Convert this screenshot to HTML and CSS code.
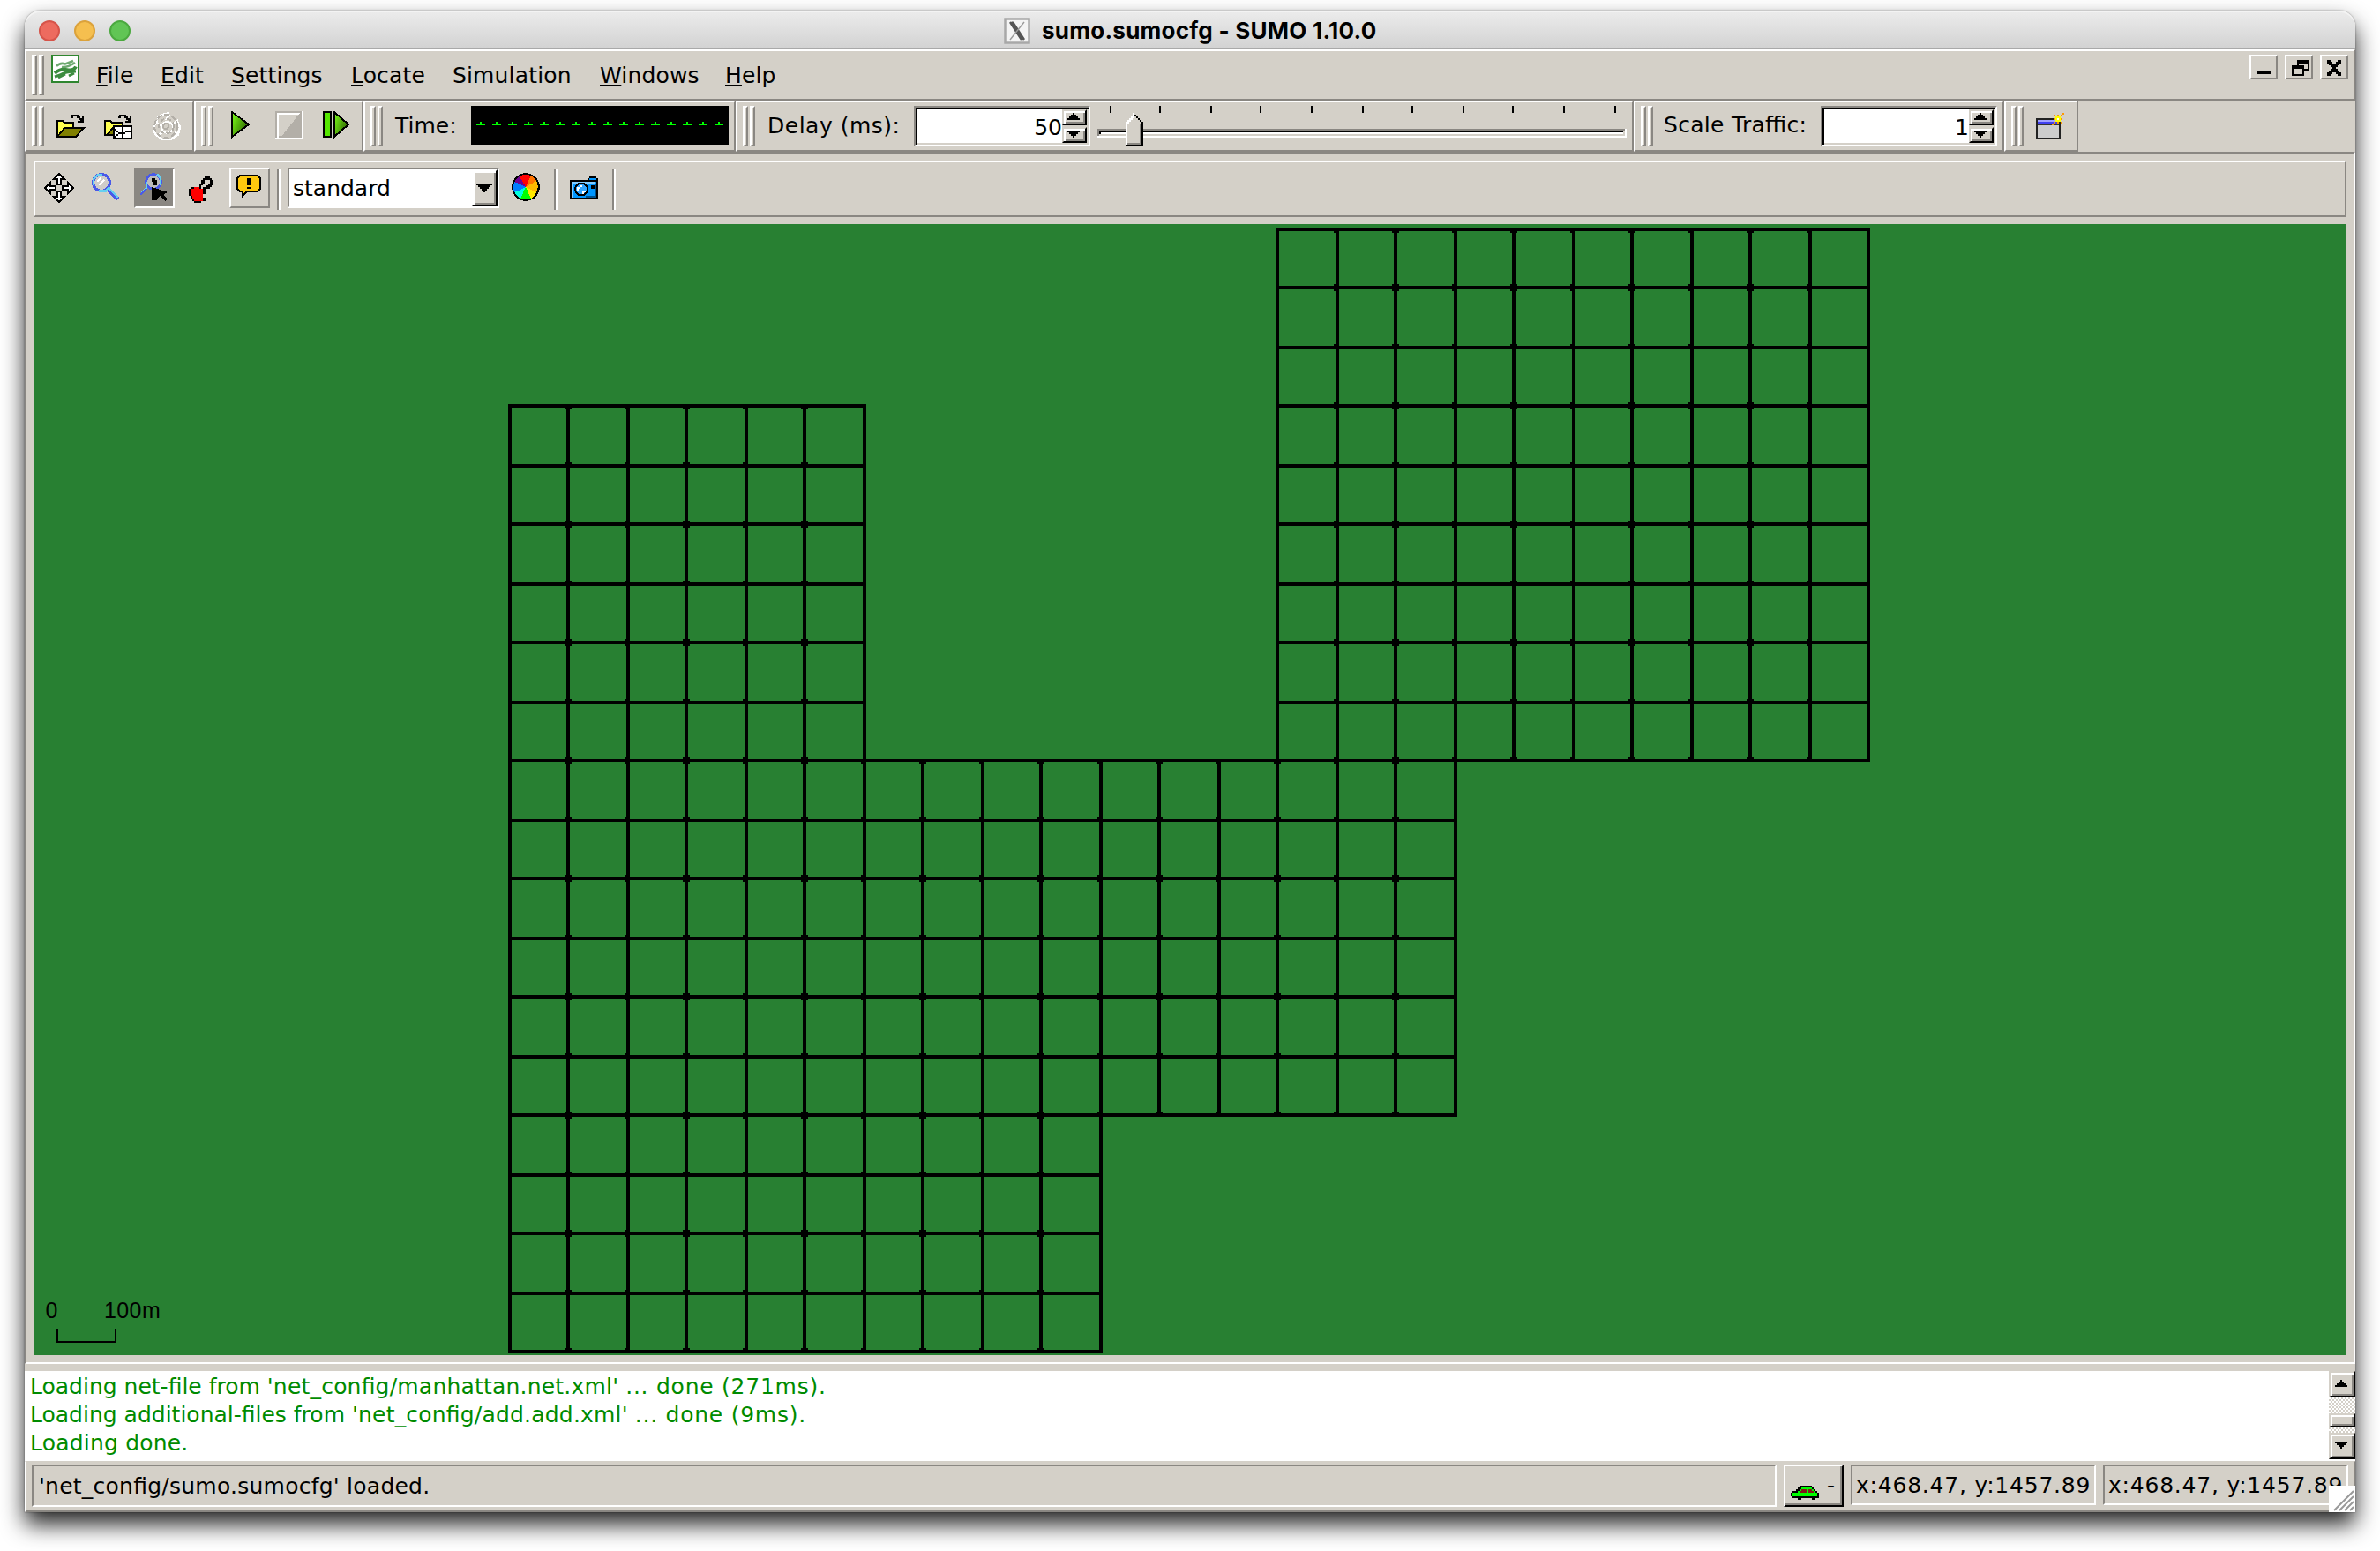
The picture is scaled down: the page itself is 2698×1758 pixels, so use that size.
FILE: index.html
```html
<!DOCTYPE html>
<html lang="en">
<head>
<meta charset="utf-8">
<title>sumo.sumocfg - SUMO 1.10.0</title>
<link rel="stylesheet" href="styles.css">
</head>
<body>
<div class="window">
  <header class="titlebar">
    <div class="lights"><i class="light red"></i><i class="light yellow"></i><i class="light green"></i></div>
    <div class="title">
      <svg class="xicon" viewBox="0 0 30 30"><rect x="1.5" y="1.5" width="27" height="27" fill="#f4f4f4" stroke="#a8a8a8" stroke-width="2.5"/><path d="M7 5L20 25M10 5L23 25" stroke="#555" stroke-width="2.4"/><path d="M8.500 5L21.500 25" stroke="#555" stroke-width="3"/><path d="M23 5L7 25" stroke="#999" stroke-width="1.400"/></svg>
      <span class="title-text">sumo.sumocfg - SUMO 1.10.0</span>
    </div>
  </header>

  <nav class="menubar">
    <div class="grip"><i></i><i></i></div>
    <svg class="sumo" viewBox="0 0 16 16"><rect x=".5" y=".5" width="15" height="15" fill="#fff" stroke="#2f862f"/><g fill="none" stroke="#3c8c3f" shape-rendering="auto"><path d="M3 6.500Q5 4.300 8 5.200L12.500 3.500M6 7Q9 7.500 13.500 4.500" stroke-width="1.300" opacity=".75"/><path d="M2 10.500Q5 7.800 9 8.500T14 6.800" stroke-width="1.900"/><path d="M2 12.500L5 11.500Q8 9.500 14 9.500M4 13L8 11M10 12L13 10.500" stroke-width="1.500"/></g></svg>
    <div class="menus">
      <span><u>F</u>ile</span><span><u>E</u>dit</span><span><u>S</u>ettings</span><span><u>L</u>ocate</span><span>Simulation</span><span><u>W</u>indows</span><span><u>H</u>elp</span>
    </div>
    <div class="mdi-buttons">
      <button><svg viewBox="0 0 16 14"><path d="M4 9h8v2H4z"/></svg></button>
      <button><svg viewBox="0 0 16 14"><path fill-rule="evenodd" d="M7 3h7v6h-3v3H4V6h3zM8 5v1h3v2h2V5zM5 8v3h5V8z"/></svg></button>
      <button><svg viewBox="0 0 16 14"><path d="M4 3h2v1h1v1h2V4h1V3h2v2h-1v1h-1v1h-1v1h1v1h1v1h1v2h-2v-1H9v-1H7v1H6v1H4v-2h1V9h1V8h1V7H6V6H5V5H4z"/></svg></button>
    </div>
  </nav>

  <div class="toolbar">
    <section class="bar">
      <div class="grip"><i></i><i></i></div>
      <div class="btn"><svg viewBox="0 0 17 17"><path d="M.5 14.500V5.500h3l1 1h5v3" fill="#ffff50" stroke="#000"/><path d="M.5 14.500l4-5h11l-4.500 5z" fill="#808000" stroke="#000"/><path d="M8 3.500h1v-1h3v1h1v1h1v1M15 3v3h-3" fill="none" stroke="#000"/></svg></div>
      <div class="btn"><svg viewBox="0 0 17 17"><path d="M.5 13.500V5.500h3l1 1h6v7z" fill="#ffff50" stroke="#000"/><path d="M1.500 13.500l4-4.500v4.500z" fill="#808000" stroke="#000"/><path d="M8 3.500h1v-1h3v1h1v1h1v1M15 3v3h-3" fill="none" stroke="#000"/><path d="M5 8h11v8H5z"/><path d="M6 9h4v3H8v-1H7v-1H6zM11 9h4v2h-3v1h-1zM6 11h1v1h1v1H7v1H6zM7 14h1v-1h2v2H7zM11 13h1v-1h3v3h-4z" fill="#fff"/></svg></div>
      <div class="btn"><svg viewBox="0 0 17 17"><g fill="none" stroke="#fff"><path d="M3 4l3-2 4-1M14 5l2 4-1 4-4 3H6l-4-3-1-4 2-4" stroke-width="1.200"/><circle cx="8.800" cy="9.200" r="3.200"/><path d="M8 5l2-3M12 7l3-2M13 11l2 3M6 12l-3 2M5 8L2 6"/></g><g fill="none" stroke="#b3afa8"><circle cx="8" cy="8.500" r="6.500" stroke-dasharray="3 1.200"/><circle cx="8.200" cy="8.500" r="4.200" stroke-dasharray="2.500 1.500"/><circle cx="8" cy="8.500" r="1.500"/></g></svg></div>
    </section>
    <section class="bar">
      <div class="grip"><i></i><i></i></div>
      <div class="btn"><svg viewBox="0 0 17 17"><defs><linearGradient id="g" x2="1" y2=".6"><stop stop-color="#7dff1a"/><stop offset="1" stop-color="#2f6600"/></linearGradient></defs><path d="M3.500.500V14.500L13 7.500z" fill="url(#g)" stroke="#000"/></svg></div>
      <div class="btn"><svg viewBox="0 0 17 17"><path d="M1.500.500h14v14h-14z" fill="#d4d0c8" stroke="#b3afa8"/><path d="M2.500 15V1.500H15" fill="none" stroke="#fff"/><path d="M15 1v14H4z" fill="#b3afa8"/><path d="M1 15.500h15.500V0" fill="none" stroke="#fff"/></svg></div>
      <div class="btn"><svg viewBox="0 0 17 17"><path d="M1.500.500h4v14h-4z" fill="#55e600" stroke="#000"/><path d="M7.500.500V14.500L15.500 7.500z" fill="url(#g)" stroke="#000"/></svg></div>
    </section>
    <section class="bar">
      <div class="grip"><i></i><i></i></div>
      <span class="label time">Time:</span>
      <div class="lcd"><i></i><i></i><i></i><i></i><i></i><i></i><i></i><i></i><i></i><i></i><i></i><i></i><i></i><i></i><i></i><i></i></div>
    </section>
    <section class="bar">
      <div class="grip"><i></i><i></i></div>
      <span class="label delay">Delay (ms):</span>
      <div class="spinner"><span>50</span><div class="arrows"><b><svg viewBox="0 0 7 4"><path d="M3 0h1v1h1v1h1v1h1v1H0V3h1V2h1V1h1z"/></svg></b><b><svg viewBox="0 0 7 4"><path d="M0 0h7v1H6v1H5v1H4v1H3V3H2V2H1V1H0z"/></svg></b></div></div>
      <svg class="slider" viewBox="0 0 300 23"><path d="M7 0h1v4H7zM35 0h1v4h-1zM64 0h1v4h-1zM92 0h1v4h-1zM121 0h1v4h-1zM150 0h1v4h-1zM178 0h1v4h-1zM207 0h1v4h-1zM235 0h1v4h-1zM264 0h1v4h-1zM293 0h1v4h-1z"/><path fill="#fff" d="M0 13h300v5H0z"/><path fill="#8a8782" d="M0 13h299v1H1v3H0z"/><path d="M1 14h297v1H2v1H1z"/><path fill="#d4d0c8" d="M1 16h298v-2h-1v2z M1 16h298v1H1z"/><path fill="#d4d0c8" d="M16 9l4.500-5L26 9v14H16z"/><path fill="#fff" d="M16 9h1V8h1V7h1V6h1V4h1v3h-1v1h-1v1h-1v1h-1v12h-1z"/><path fill="#8a8782" d="M24 10h1v12h-8v-1h7z"/><path d="M21 5h1v1h1v1h1v1h1v1h1v14H16v-1h9V9h-1V8h-1V7h-1V6h-1z"/></svg>
    </section>
    <section class="bar">
      <div class="grip"><i></i><i></i></div>
      <span class="label scale">Scale Traffic:</span>
      <div class="spinner"><span>1</span><div class="arrows"><b><svg viewBox="0 0 7 4"><path d="M3 0h1v1h1v1h1v1h1v1H0V3h1V2h1V1h1z"/></svg></b><b><svg viewBox="0 0 7 4"><path d="M0 0h7v1H6v1H5v1H4v1H3V3H2V2H1V1H0z"/></svg></b></div></div>
    </section>
    <section class="bar">
      <div class="grip"><i></i><i></i></div>
      <div class="btn"><svg viewBox="3 0 17 17"><path d="M3.500 4.500h13v11h-13z" fill="#ccc" stroke="#222"/><path d="M4 5h12v1H4z" fill="#a0a0ff"/><path d="M4 6h12v1H4z" fill="#4040f0"/><path d="M4 7h12v1H4z" fill="#333"/><path d="M13 2h1v1h-1zM17 2h1v1h-1zM13 6h1v1h-1zM17 6h1v1h-1zM12 7h1v1h-1zM18 1h1v1h-1zM15 2h1v1h-1zM15 6h1v1h-1zM13 4h1v1h-1zM17 4h1v1h-1z" fill="#ff9a00"/><path d="M14 3h3v3h-3z" fill="#ff0"/><path d="M15 4h1v1h-1z" fill="#fff"/></svg></div>
    </section>
  </div>

  <main class="mdi">
    <div class="viewbar">
      <div class="btn"><svg viewBox="0 0 17 17"><path fill="#fff" stroke="#000" d="M8.500.500l3 3h-2v3h-2v-3h-2zM8.500 16.500l3-3h-2v-3h-2v3h-2zM.5 8.500l3-3v2h3v2h-3v2zM16.500 8.500l-3-3v2h-3v2h3v2z"/></svg></div>
      <div class="btn"><svg viewBox="0 0 17 17"><circle cx="5.500" cy="5.500" r="4.700" fill="#d0cdca" stroke="#4a5ae8" stroke-width="1.600"/><path d="M1 7V3.500L3.500 1H6M4 10.300h4l2.300-2.300" fill="none" stroke="#66d0f0" stroke-width="1.300"/><path d="M3 5l2-2M4 7l3-3" stroke="#fff"/><path d="M9.500 9.500l5.500 5.500" stroke="#4a5ae8" stroke-width="2.400"/><path d="M10 9l5 5" stroke="#66d0f0"/></svg></div>
      <div class="btn pressed"><svg viewBox="0 0 17 17"><circle cx="8" cy="5" r="4.200" fill="#bbb" stroke="#4a5ae8" stroke-width="1.500"/><path d="M12 7V3L10 .700M4 5v3.500L1 11.500" fill="none" stroke="#66d0f0" stroke-width="1.300"/><path d="M4 9l-3.500 3.500" stroke="#4a5ae8" stroke-width="1.300"/><path d="M7 3h2v1h1v3H8V5H7z"/><path d="M7 8l9 3-2.500 1.500L16 15l-1.500 1-3-3-1.500 2.500H7z"/></svg></div>
      <div class="btn"><svg viewBox="0 0 17 17"><path d="M2 9h2V8h4v1h1v7H4v-1H3v-1H2z" fill="red"/><path d="M7 6h2v1H8v2H7zM2 8h2v1H2zM1 9h1v4H1zM2 13h1v2H2zM3 15h1v1H3zM4 16h4v1H4z"/><path d="M10 2h3v1h1v1h1v3h-1v1h-1v1h-2v3H9V8h2V7h1V6h1V4h-3v2H8V4h1V3h1zM9 14h2v2H9z"/></svg></div>
      <div class="btn raised"><svg viewBox="0 0 17 17"><path d="M3 1.500h10l1.500 1.500v6L13 10.500H7L4.500 13v-2.500H3L1.500 9V3z" fill="#ffc90e" stroke="#000"/><path d="M7 3h2v4H7zM7 8h2v1.200H7z"/></svg></div>
      <i class="sep"></i>
      <div class="combo"><span>standard</span><b><svg viewBox="0 0 9 5"><path d="M0 0h9v1H8v1H7v1H6v1H5v1H4V4H3V3H2V2H1V1H0z"/></svg></b></div>
      <div class="btn"><svg viewBox="0 0 17 17"><circle cx="8" cy="8" r="7.900"/><path d="M8 8L4.500 2A7 7 0 0 1 11 1.500z" fill="red"/><path d="M8 8l3-6.500A7 7 0 0 1 14 4.500z" fill="#ff7300"/><path d="M8 8l6-3.500A7 7 0 0 1 14 11z" fill="#ffb900"/><path d="M8 8l6 3a7 7 0 0 1-3 3.500z" fill="#ffe800"/><path d="M8 8l3 6.500a7 7 0 0 1-6 0z" fill="#0f0"/><path d="M8 8l-3 6.500A7 7 0 0 1 1.700 11z" fill="#00ffe0"/><path d="M8 8l-6.300 3A7 7 0 0 1 1.700 5z" fill="#007dff"/><path d="M8 8L1.700 5A7 7 0 0 1 4.500 2z" fill="#70008f"/></svg></div>
      <i class="sep"></i>
      <div class="btn"><svg viewBox="0 0 17 17"><path d="M0 4h10V3h1V2h4v1h1v12H0z"/><path d="M1 5h14v9H1z" fill="#0096ff"/><path d="M11 3h4v1h-4z" fill="#0096ff"/><path d="M1 5h13v1H2v8H1z" fill="#80caff"/><path d="M14 6h1v8H9v-1h5z" fill="#00508a"/><circle cx="6.500" cy="9.300" r="4"/><circle cx="6.500" cy="9.300" r="3" fill="#30a4ff"/><path d="M4 8h2V7h1v1H6v1H5v1H4zM7 10h2v1H8v1H7z" fill="#fff"/><path d="M12 7h2v2h-2z"/></svg></div>
      <i class="sep"></i>
    </div>
    <svg class="map" viewBox="38 254 2622 1282">
      <g id="roads"></g>
      <path d="M64 1506h2v14h64v-14h2v16H64z"/>
      <text x="51.500" y="1494">0</text><text x="118" y="1494">100m</text>
    </svg>
  </main>

  <div class="splitter"></div>

  <div class="log">
    <div class="lines">
      <p>Loading net-file from <span class="path">'net_config/manhattan.net.xml'</span> <span class="result">... done (271ms).</span></p>
      <p>Loading additional-files from <span class="path">'net_config/add.add.xml'</span> <span class="result">... done (9ms).</span></p>
      <p><span class="path">Loading done.</span></p>
    </div>
    <div class="scroll">
      <b class="up"><svg viewBox="0 0 7 4"><path d="M3 0h1v1h1v1h1v1h1v1H0V3h1V2h1V1h1z"/></svg></b>
      <b class="thumb"></b>
      <b class="down"><svg viewBox="0 0 7 4"><path d="M0 0h7v1H6v1H5v1H4v1H3V3H2V2H1V1H0z"/></svg></b>
    </div>
  </div>

  <footer class="status">
    <div class="field message">'net_config/sumo.sumocfg' loaded.</div>
    <div class="cars"><svg viewBox="0 0 16 8"><path d="M5 0h7v1h1v1h1v1h1v1h1v3h-2v1h-2V7H6v1H4V7H1V6H0V4h1V3h2V2h1V1h1z"/><path d="M6 1h6v1h1v1h1v1h1v2H1V4h3V3h1V2h1z" fill="#0f0"/><path d="M6 2h3v2H5V3h1zM10 2h2v1h1v1h-3z" fill="#801818"/></svg><span>-</span></div>
    <div class="field coord">x:468.47, y:1457.89</div>
    <div class="field coord">x:468.47, y:1457.89</div>
    <svg class="resize" viewBox="0 0 30 30"><path fill="#fff" d="M0 0h30v30H0z"/><path d="M6 28L28 6M12 28L28 12M18 28L28 18M24 28l4-4" stroke="#999" stroke-width="2"/></svg>
  </footer>
</div>
<script src="map.js"></script>
</body>
</html>
```
FILE: map.js
```js
// Road network: blocks of grid cells given as [col0, row0, col1, row1].
const blocks = [[0, 3, 6, 9], [0, 9, 16, 15], [0, 15, 10, 19], [13, 0, 23, 9]];
const snap = v => 2 * Math.round(v / 2);
const px = c => snap(576 + 66.96 * c);
const py = r => snap(258 + 66.96 * r);
const inside = (c, r) => blocks.some(b => c >= b[0] && c < b[2] && r >= b[1] && r < b[3]);

let d = '';
const rect = (x, y, w, h) => { d += `M${x} ${y}h${w}v${h}h${-w}z`; };
for (const [c0, r0, c1, r1] of blocks) {
  for (let c = c0; c <= c1; c++) rect(px(c), py(r0), 4, py(r1) - py(r0) + 4);
  for (let r = r0; r <= r1; r++) rect(px(c0), py(r), px(c1) - px(c0) + 4, 4);
}
// Junction surfaces widen the crossing slightly.
for (let c = 0; c <= 23; c++) {
  for (let r = 0; r <= 19; r++) {
    const nw = inside(c - 1, r - 1), ne = inside(c, r - 1);
    const sw = inside(c - 1, r), se = inside(c, r);
    const x = px(c), y = py(r);
    if (nw && ne) rect(x - 2, y - 2, c % 2 ? 8 : 4, 4);
    if (sw && se && (r % 2 || !nw)) rect(x - 2, y + 2, c % 2 ? 8 : 4, 4);
  }
}
const path = document.createElementNS('http://www.w3.org/2000/svg', 'path');
path.setAttribute('d', d);
document.getElementById('roads').append(path);
```
FILE: styles.css
```css
* { box-sizing: border-box; }
body {
  margin: 0; padding: 12px 28px; height: 1758px; background: #fff; overflow: hidden;
  font: 25px/46px "DejaVu Sans", sans-serif; color: #000;
  font-feature-settings: "liga" 1;
}
svg { display: block; shape-rendering: crispEdges; }
.window {
  width: 2642px; height: 1702px; display: flex; flex-direction: column;
  background: #d4d0c8; border-radius: 18px 18px 0 0;
  box-shadow: 0 0 2px rgba(0,0,0,.45), 0 14px 26px rgba(0,0,0,.85);
}

.titlebar {
  height: 44px; display: grid; align-items: center; position: relative;
  border-radius: 18px 18px 0 0; border-bottom: 2px solid #a9a9a9;
  background: linear-gradient(#ececec, #d3d3d3); box-shadow: inset 0 2px 0 #f3f3f3;
  padding-top: 2px;
}
.titlebar > * { grid-area: 1 / 1; }
.lights { display: flex; gap: 16px; padding-left: 16px; }
.light { width: 24px; height: 24px; border-radius: 50%; border: 2px solid; }
.red { background: #ed6b5f; border-color: #d6544a; }
.yellow { background: #f5bf4f; border-color: #dba23c; }
.green { background: #61c555; border-color: #4ba93f; }
.title { display: flex; align-items: center; padding: 1px 0 0 1110px; gap: 13px; }
.xicon { width: 30px; height: 30px; shape-rendering: auto; }
.title-text { font: bold 26px/40px Inter, sans-serif; letter-spacing: .25px; white-space: nowrap; }

.grip { display: flex; gap: 2px; height: 46px; flex: none; }
.grip i { width: 6px; border: 2px solid; border-color: #fff #8a8782 #8a8782 #fff; }

.menubar {
  height: 58px; display: flex; gap: 8px; padding: 4px 6px;
  border: 2px solid; border-color: #fff #8a8782 #8a8782 #fff;
}
.sumo { width: 32px; height: 32px; }
.menus {
  display: grid; grid-template-columns: 73px 80px 136px 115px 167px 142px 100px;
  padding-left: 11px; line-height: 47px; letter-spacing: .15px; white-space: nowrap;
}
.menus u { text-decoration-thickness: 2px; text-underline-offset: 2px; text-decoration-skip-ink: none; }
.mdi-buttons { display: flex; gap: 8px; margin-left: auto; }
.mdi-buttons button {
  width: 32px; height: 28px; padding: 0; background: none;
  border: 2px solid; border-color: #fff #8a8782 #8a8782 #fff;
}
.mdi-buttons svg { width: 32px; height: 28px; margin: -2px; }

.toolbar { height: 58px; display: flex; }
.bar {
  display: flex; gap: 8px; padding: 4px 6px;
  border: 2px solid; border-color: #fff #8a8782 #8a8782 #fff;
}
.btn { width: 46px; height: 46px; padding: 6px; flex: none; }
.btn svg { width: 34px; height: 34px; }
.pressed, .raised { padding: 4px; border: 2px solid; }
.pressed { background: #8a8782; border-color: #8a8782 #fff #fff #8a8782; }
.raised { border-color: #fff #8a8782 #8a8782 #fff; }
.label { white-space: nowrap; flex: none; }
.time { width: 84px; padding-left: 6px; }
.delay { width: 164px; padding-left: 6px; letter-spacing: .5px; }
.scale { width: 174px; padding: 0 0 0 4px; line-height: 44px; letter-spacing: .3px; }
.lcd { width: 292px; height: 44px; background: #000; display: flex; gap: 8px; padding: 18px 6px; }
.lcd i { width: 10px; height: 4px; background: linear-gradient(#0f0, #0f0) 4px 0 / 2px 2px no-repeat, linear-gradient(#0f0, #0f0) 0 2px / 10px 2px no-repeat; }
.spinner {
  width: 200px; height: 46px; background: #fff; display: flex; justify-content: flex-end;
  border: 2px solid; border-color: #8a8782 #fff #fff #8a8782;
  padding: 2px; box-shadow: inset 2px 2px 0 #000, inset -2px -2px 0 #d4d0c8;
}
.spinner span { margin-top: -2px; line-height: 45px; height: 38px; }
.arrows { width: 28px; height: 38px; display: grid; grid-template-rows: 18px 18px; gap: 2px; background: #d4d0c8; }
.arrows b, .scroll b, .combo b {
  display: grid; place-items: center; background: #d4d0c8;
  border: 2px solid; border-color: #d4d0c8 #000 #000 #d4d0c8;
  box-shadow: inset 2px 2px 0 #fff, inset -2px -2px 0 #8a8782;
}
.arrows svg, .scroll svg { width: 14px; height: 8px; margin: -2px 0 0 -2px; }
.slider { width: 600px; height: 46px; }

.mdi {
  height: 1374px; padding: 8px; display: flex; flex-direction: column; gap: 8px;
  border: 2px solid; border-color: #8a8782 #fff #fff #8a8782;
}
.viewbar {
  height: 64px; display: flex; gap: 8px; padding: 6px 4px;
  border: 2px solid; border-color: #fff #8a8782 #8a8782 #fff;
}
.sep { width: 4px; height: 46px; margin-top: 2px; background: linear-gradient(90deg, #8a8782 50%, #fff 50%); }
.combo {
  width: 240px; height: 46px; background: #fff; display: flex; justify-content: space-between;
  border: 2px solid; border-color: #8a8782 #fff #fff #8a8782; padding-left: 4px; line-height: 43px;
}
.combo b { width: 30px; height: 42px; border-color: #fff #000 #000 #fff; }
.combo svg { width: 18px; height: 10px; }
.map { width: 2622px; height: 1282px; background: #288032; }
.map text { font: 25px "Liberation Sans", sans-serif; letter-spacing: .4px; }

.splitter { height: 8px; }
.log { height: 102px; display: flex; background: #fff; }
.lines { flex: 1; padding: 2px 0 0 6px; color: #008b00; line-height: 32px; white-space: nowrap; }
.lines p { margin: 0; }
.path { letter-spacing: .2px; }
.result { letter-spacing: .75px; }
.scroll {
  width: 30px; height: 100px; display: flex; flex-direction: column;
  background: repeating-conic-gradient(#fff 0 25%, #d4d0c8 0 50%) 0 0 / 4px 4px;
}
.up, .down { height: 30px; }
.thumb { height: 16px; margin: 18px 0 6px; }

.status {
  height: 58px; display: flex; gap: 8px; padding: 2px 6px 4px; position: relative;
  border: 2px solid; border-color: #d4d0c8 #8a8782 #8a8782 #fff;
}
.field { border: 2px solid; border-color: #8a8782 #fff #fff #8a8782; white-space: nowrap; height: 48px; }
.message { width: 1978px; padding-left: 6px; line-height: 46px; letter-spacing: .24px; }
.coord { width: 278px; height: 46px; padding-left: 4px; line-height: 44px; letter-spacing: .78px; overflow: hidden; }
.cars {
  width: 68px; height: 48px; display: flex; padding: 22px 0 0 6px; gap: 9px;
  border: 2px solid; border-color: #fff #000 #000 #fff; box-shadow: inset -2px -2px 0 #8a8782;
}
.cars svg { width: 32px; height: 16px; }
.cars span { line-height: 0; }
.resize { position: absolute; right: -2px; bottom: -2px; width: 30px; height: 30px; shape-rendering: auto; }
```
